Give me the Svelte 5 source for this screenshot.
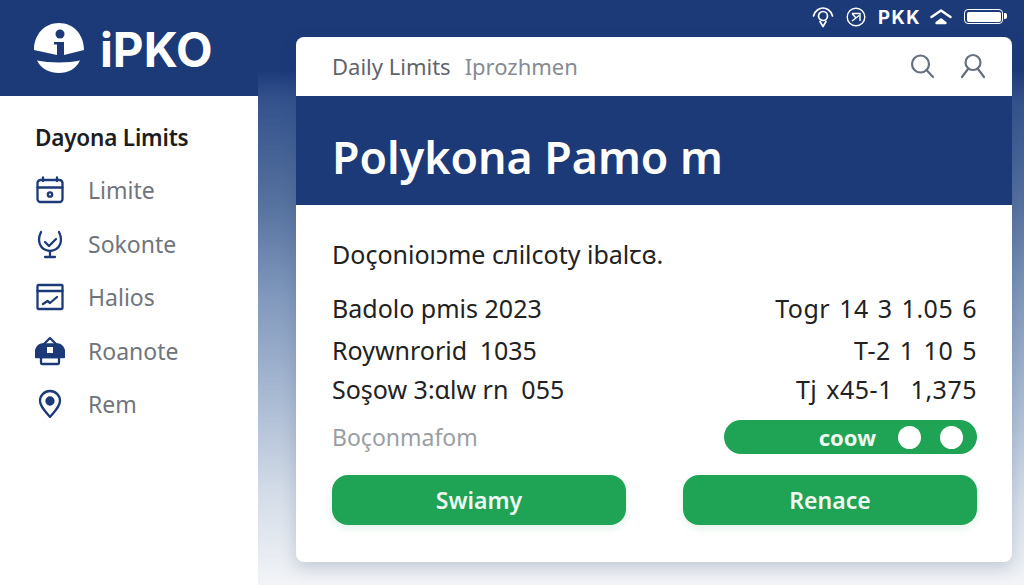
<script>
	const nav = ['Limite', 'Sokonte', 'Halios', 'Roanote', 'Rem'];
	const rows = [
		['Badolo pmis 2023', 'Togr 14 3 1.05 6'],
		['Roywnrorid\u20021035', 'T-2 1 10 5'],
		['Soşow 3:ɑlw rn\u00a0 055', 'Tj x45-1\u2002\u20091,375']
	];
</script>

<div class="page">
	<aside>
		<div class="brand">
			<svg class="logo" width="52" height="52" viewBox="0 -1 52 52">
				<path d="M1 27C1 11 12 0 26 0S51 11 51 27L31 32V19H21V21.500H24V32Z" fill="#fff" />
				<circle cx="27" cy="11" r="4.500" fill="#1c3a78" />
				<path d="M4 37.500C16 40 36 40 47 37.500 43 46 35 50 26 50S8 46 4 37.500Z" fill="#fff" />
			</svg>
			<span class="word">iPKO</span>
		</div>
		<nav>
			<h2>Dayona Limits</h2>
			<ul>
				{#each nav as item, i}
					<li>
						<svg width="30" height="30" viewBox="0 0 30 30" fill="none" stroke="#1c3a78" stroke-width="2.300" stroke-linecap="round" stroke-linejoin="round">
							{#if i === 0}
								<rect x="2.500" y="5" width="25" height="22" rx="3" />
								<path d="M2.500 12.500H27.500M8 2.500V6M22 2.500V6" />
								<circle cx="15" cy="19.500" r="2.200" />
							{:else if i === 1}
								<path d="M6 3C2 11 4 21 15 22 26 21 28 11 24 3M15 22V28M10 28H20" />
								<path d="M10 13L14 17 21 10" />
							{:else if i === 2}
								<rect x="2.500" y="3" width="25" height="24" rx="1" />
								<path d="M2.500 9H27.500M8 22L12.500 19 15 21 22 15" />
							{:else if i === 3}
								<path d="M8 9L15 2 22 9" />
								<path d="M1 16C1 12 4 8.500 7 8.500H23C26 8.500 29 12 29 16V21H1Z" fill="#1c3a78" />
								<rect x="12" y="11" width="6" height="6" fill="#fff" stroke="none" />
								<rect x="6" y="21" width="18" height="7" rx="1.500" />
							{:else}
								<path d="M15 28C9 21 5 17 5 12A10 10 0 0 1 25 12C25 17 21 21 15 28Z" />
								<circle cx="15" cy="12" r="3.500" fill="#1c3a78" />
							{/if}
						</svg>
						<span>{item}</span>
					</li>
				{/each}
			</ul>
		</nav>
	</aside>

	<main>
		<div class="status">
			<svg width="22" height="22" viewBox="0 0 22 22" fill="none" stroke="#fff" stroke-width="1.700" stroke-linecap="round" stroke-linejoin="round">
				<path d="M1.500 10C3 4 8 2 11 2S19 4 20.500 10" />
				<circle cx="11" cy="10" r="4.500" />
				<path d="M8 15.500L11 20.500 14 15.500" />
			</svg>
			<svg width="20" height="20" viewBox="0 0 20 20" fill="none" stroke="#fff" stroke-width="1.400">
				<circle cx="10" cy="10" r="8.800" />
				<path d="M6 6.500H14V14M6 6.500L10 11 6 14M10 11L13 8.500" />
			</svg>
			<span class="pkk">PKK</span>
			<svg width="22" height="16" viewBox="0 0 22 16" fill="none" stroke="#fff" stroke-width="2.400" stroke-linecap="round" stroke-linejoin="round">
				<path d="M1.500 8L11 1.500 20.500 8" />
				<path d="M6.500 14L11 10.500 15.500 14Z" fill="#fff" />
			</svg>
			<div class="battery"><i></i></div>
		</div>

		<section class="card">
			<header>
				<div class="crumbs"><b>Daily Limits</b><span>Iprozhmen</span></div>
				<div class="tools">
					<svg width="26" height="26" viewBox="0 0 26 26" fill="none" stroke="#66707f" stroke-width="2.200" stroke-linecap="round">
						<circle cx="11.500" cy="11" r="8.500" />
						<path d="M17.500 17L24 24" />
					</svg>
					<svg width="26" height="26" viewBox="0 0 26 26" fill="none" stroke="#66707f" stroke-width="2.200" stroke-linecap="round">
						<circle cx="13" cy="9.500" r="7.500" />
						<path d="M8 16L2 24M18 16L24 24" />
					</svg>
				</div>
			</header>
			<div class="banner"><h1>Polykona Pamo m</h1></div>
			<div class="body">
				<p class="lead">Doçonioıɔme cлilcoty ibalꞇɞ.</p>
				<div class="rows">
					{#each rows as row}
						<div class="row"><span>{row[0]}</span><span class="amount">{row[1]}</span></div>
					{/each}
				</div>
				<div class="toggle-row">
					<span>Boçonmafom</span>
					<div class="toggle"><b>coow</b><i></i><i></i></div>
				</div>
				<div class="actions">
					<button>Swiamy</button>
					<button>Renace</button>
				</div>
			</div>
		</section>
	</main>
</div>

<style>
	:global(body) {
		margin: 0;
		font-family: 'Noto Sans', 'Open Sans', sans-serif;
	}

	.page {
		display: grid;
		grid-template-columns: 258px 1fr;
		width: 1024px;
		height: 585px;
		overflow: hidden;
		background: linear-gradient(180deg, #1c3a78 0, #1c3a78 12%, #33528d 17%, #56729f 35%, #8199bd 51%, #a9bad3 68%, #d5dde8 85%, #f2f4f7 100%);
	}

	aside {
		display: flex;
		flex-direction: column;
	}

	.brand {
		height: 96px;
		box-sizing: border-box;
		background: #1c3a78;
		display: flex;
		align-items: center;
		gap: 15px;
		padding: 0 0 0 33px;
	}

	.word {
		color: #fff;
		font-family: 'Inter', sans-serif;
		font-size: 47.500px;
		font-weight: 700;
		margin-top: 3px;
	}

	nav {
		flex: 1;
		background: #fff;
		padding: 28px 0 0 35px;
	}

	h2 {
		margin: 0 0 23px;
		font-size: 22.500px;
		line-height: 28px;
		font-weight: 600;
		color: #1b1d21;
		letter-spacing: -0.2px;
	}

	ul {
		list-style: none;
		margin: 0;
		padding: 0;
		display: flex;
		flex-direction: column;
		gap: 23.500px;
	}

	li {
		display: flex;
		align-items: center;
		height: 30px;
		gap: 23px;
		color: #70757c;
		font-size: 23px;
	}

	main {
		display: flex;
		flex-direction: column;
		padding: 0 12px 23px 38px;
		min-width: 0;
	}

	.status {
		height: 37px;
		display: flex;
		align-items: center;
		justify-content: flex-end;
		gap: 12px;
		padding: 0 9px 4px 0;
		box-sizing: border-box;
	}

	.pkk {
		color: #fff;
		font-family: 'Inter', sans-serif;
		font-weight: 700;
		font-size: 18.500px;
		letter-spacing: 1.500px;
		margin-right: -3px;
	}

	.battery {
		width: 39px;
		height: 15px;
		border: 1.500px solid #fff;
		border-radius: 4px;
		padding: 1.500px;
		box-sizing: border-box;
		position: relative;
	}

	.battery::after {
		content: '';
		position: absolute;
		right: -5px;
		top: 3px;
		width: 3px;
		height: 6px;
		background: #fff;
		border-radius: 0 2px 2px 0;
	}

	.battery i {
		display: block;
		height: 100%;
		background: #fff;
		border-radius: 2px;
	}

	.card {
		flex: 1;
		display: flex;
		flex-direction: column;
		background: #fff;
		border-radius: 8px;
		box-shadow: 0 6px 16px rgba(40, 60, 100, 0.2);
		overflow: hidden;
	}

	header {
		height: 59px;
		display: flex;
		align-items: center;
		justify-content: space-between;
		padding: 0 26px 2px 36px;
		box-sizing: border-box;
		flex: none;
	}

	.crumbs {
		display: flex;
		gap: 14px;
		font-size: 22px;
		color: #868b92;
	}

	.crumbs b {
		font-weight: 400;
		color: #5f646c;
	}

	.tools {
		display: flex;
		gap: 25px;
	}

	.banner {
		height: 109px;
		box-sizing: border-box;
		background: #1c3a78;
		display: flex;
		align-items: center;
		padding: 12px 36px 0;
		flex: none;
	}

	h1 {
		margin: 0;
		color: #fff;
		font-size: 44.700px;
		font-weight: 600;
	}

	.body {
		padding: 32px 35px 0 36px;
		display: flex;
		flex-direction: column;
	}

	.lead {
		margin: 0 0 21px;
		font-size: 25px;
		line-height: 34px;
		color: #222;
	}

	.rows {
		display: flex;
		flex-direction: column;
	}

	.row {
		display: flex;
		justify-content: space-between;
		font-size: 25px;
		line-height: 32px;
		color: #222;
	}

	.row + .row {
		margin-top: 10px;
	}

	.row:last-child {
		margin-top: 7px;
	}

	.amount {
		letter-spacing: 0.5px;
		word-spacing: 2px;
	}

	.toggle-row {
		display: flex;
		align-items: center;
		justify-content: space-between;
		margin-top: 15px;
		color: #9a9ea3;
		font-size: 23px;
	}

	.toggle {
		width: 253px;
		height: 34px;
		background: #1fa354;
		border-radius: 17px;
		display: flex;
		align-items: center;
		justify-content: flex-end;
		gap: 19px;
		padding-right: 14px;
		box-sizing: border-box;
	}

	.toggle b {
		color: #f0f8f2;
		font-size: 22px;
		font-weight: 700;
		margin-right: 3px;
	}

	.toggle i {
		width: 23px;
		height: 23px;
		border-radius: 50%;
		background: #fff;
	}

	.actions {
		display: flex;
		justify-content: space-between;
		margin-top: 21px;
	}

	button {
		width: 294px;
		height: 50px;
		border: 0;
		border-radius: 16px;
		background: #1fa354;
		color: #f0f8f2;
		font: 600 23px 'Noto Sans', sans-serif;
		box-shadow: 0 3px 8px rgba(31, 163, 84, 0.15);
	}
</style>
